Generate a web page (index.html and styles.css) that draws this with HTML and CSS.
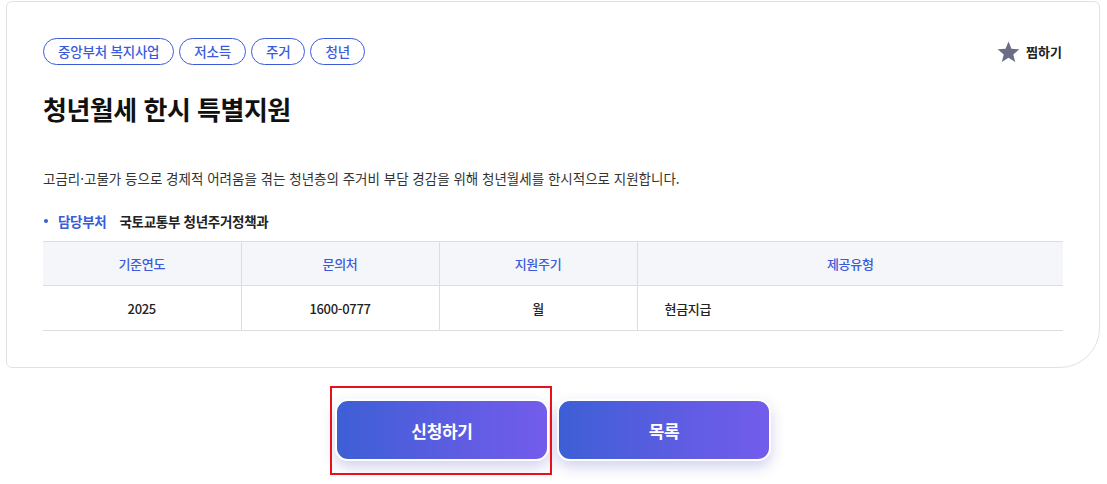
FILE: index.html
```html
<!DOCTYPE html>
<html lang="ko">
<head>
<meta charset="utf-8">
<link rel="stylesheet" href="styles.css">
</head>
<body>
<div class="page">
  <section class="card">
    <div class="top-row">
      <ul class="tags">
        <li class="tag">중앙부처 복지사업</li>
        <li class="tag">저소득</li>
        <li class="tag">주거</li>
        <li class="tag">청년</li>
      </ul>
      <button class="fav" type="button">
        <svg class="star" width="23" height="22" viewBox="0 0 24 23"><path d="M12 0.5l3.1 7.6 8.2 0.6-6.3 5.3 2 8-7-4.4-7 4.4 2-8-6.3-5.3 8.2-0.6z" fill="#6a6d85"/></svg>
        <span>찜하기</span>
      </button>
    </div>
    <h1 class="title">청년월세 한시 특별지원</h1>
    <p class="desc">고금리·고물가 등으로 경제적 어려움을 겪는 청년층의 주거비 부담 경감을 위해 청년월세를 한시적으로 지원합니다.</p>
    <div class="dept">
      <span class="dot"></span>
      <span class="dept-label">담당부처</span>
      <span class="dept-value">국토교통부 청년주거정책과</span>
    </div>
    <table class="info">
      <thead>
        <tr><th class="c1">기준연도</th><th class="c2">문의처</th><th class="c3">지원주기</th><th class="c4">제공유형</th></tr>
      </thead>
      <tbody>
        <tr><td>2025</td><td>1600-0777</td><td>월</td><td class="left">현금지급</td></tr>
      </tbody>
    </table>
  </section>
  <div class="actions">
    <div class="highlight">
      <button class="btn" type="button">신청하기</button>
    </div>
    <button class="btn" type="button">목록</button>
  </div>
</div>
</body>
</html>
```

FILE: styles.css
```css
* { box-sizing: border-box; }
html, body { margin: 0; padding: 0; background: #fff; }
body {
  font-family: "Noto Sans CJK KR", "Noto Sans", sans-serif;
  color: #222;
}
.page { padding: 1px 7px 23px 6px; min-height: 484px; }
.card {
  border: 1px solid #e2e2e2;
  border-radius: 6px 6px 40px 6px;
  padding: 36px 36px 36px 36px;
  height: 367px;
}
.top-row {
  display: flex;
  justify-content: space-between;
  align-items: center;
}
.tags {
  list-style: none;
  margin: 0;
  padding: 0;
  display: flex;
  gap: 5px;
}
.tag {
  height: 27px;
  line-height: 25px;
  border: 1px solid #3b5bdb;
  color: #3b5bdb;
  border-radius: 14px;
  padding: 0 14px;
  font-size: 13.5px;
  font-weight: 500;
  letter-spacing: -0.2px;
}
.fav {
  display: flex;
  align-items: center;
  gap: 6px;
  background: none;
  border: 0;
  padding: 0;
  font-family: inherit;
  font-size: 13px;
  font-weight: 700;
  color: #222;
  margin-right: 1px;
}
.title {
  margin: 26px 0 0;
  font-size: 26px;
  line-height: 36px;
  font-weight: 700;
  color: #111;
  letter-spacing: -0.5px;
}
.desc {
  margin: 41px 0 0;
  font-size: 13.5px;
  line-height: 20px;
  color: #333;
}
.dept {
  display: flex;
  align-items: center;
  margin-top: 23px;
  font-size: 13.5px;
  font-weight: 700;
  line-height: 20px;
  letter-spacing: -0.3px;
}
.dot {
  width: 4px;
  height: 4px;
  border-radius: 50%;
  background: #3b5bdb;
  margin: 0 10px 0 1px;
}
.dept-label { color: #3b5bdb; margin-right: 13px; }
.dept-value { color: #222; }
.info {
  width: 100%;
  margin-top: 10px;
  border-collapse: collapse;
  font-size: 13px;
  letter-spacing: -0.3px;
}
.info th {
  background: #f5f6fa;
  color: #3b5bdb;
  font-weight: 500;
  height: 44px;
  border-top: 1px solid #dcdde3;
  border-bottom: 1px solid #dcdde3;
}
.info td {
  height: 45px;
  text-align: center;
  font-weight: 500;
  color: #222;
  border-bottom: 1px solid #dcdde3;
}
.info th + th, .info td + td { border-left: 1px solid #dcdde3; }
.info .c1, .info .c2, .info .c3 { width: 198px; }
.info td.left { text-align: left; padding-left: 27px; }
.actions {
  display: flex;
  justify-content: center;
  gap: 8px;
  margin-top: 31px;
}
.highlight { position: relative; display: flex; }
.highlight::after {
  content: "";
  position: absolute;
  top: -13px;
  left: -5px;
  right: -3px;
  bottom: -14px;
  border: 2px solid #e8101a;
  pointer-events: none;
}
.btn {
  width: 214px;
  height: 62px;
  border: 2px solid #fff;
  border-radius: 13px;
  background: linear-gradient(90deg, #3d5fd6 0%, #5a5de0 50%, #735cec 100%);
  color: #fff;
  font-family: inherit;
  font-size: 17px;
  font-weight: 700;
  box-shadow: 0 6px 14px rgba(70, 70, 190, 0.25);
  letter-spacing: -0.3px;
}
```
